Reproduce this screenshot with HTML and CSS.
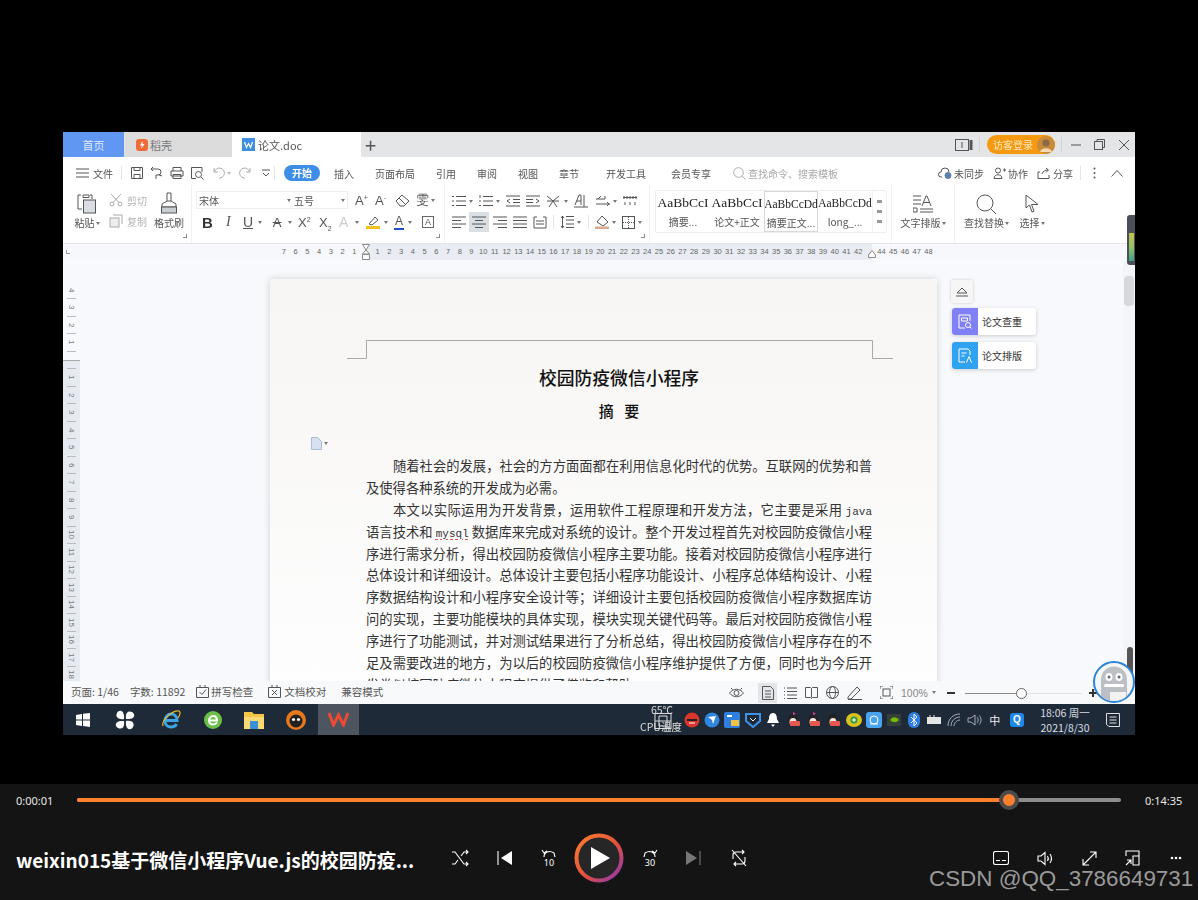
FILE: index.html
```html
<!DOCTYPE html>
<html lang="zh">
<head>
<meta charset="utf-8">
<title>论文.doc</title>
<link rel="stylesheet" href="styles.css">
</head>
<body>
<div class="stage">
<div class="window">

  <div class="tabs">
    <div class="tab tab-home">首页</div>
    <div class="tab tab-shell"><svg width="12" height="12" viewBox="0 0 12 12"><rect width="12" height="12" rx="3" fill="#ef6b3a"/><path d="M6.5 2 4 6.5h2L5 10l3.5-5H6.5z" fill="#fff"/></svg><span>稻壳</span></div>
    <div class="tab tab-doc"><svg width="13" height="13" viewBox="0 0 13 13"><rect width="13" height="13" fill="#3f8fe0"/><path d="M2.5 4 4.5 9.5 6.5 5.5 8.5 9.5 10.5 4" fill="none" stroke="#fff" stroke-width="1.2"/></svg><span>论文.doc</span></div>
    <div class="tab-plus">+</div>
    <div class="tab-right">
      <svg class="ic" width="18" height="12" viewBox="0 0 18 12"><rect x=".5" y=".5" width="13" height="11"/><path d="M16 1v10" stroke-width="3"/><path d="M7 3v6" stroke-width="1"/></svg>
      <span class="vsep"></span>
      <div class="login"><span>访客登录</span><svg width="18" height="18" viewBox="0 0 18 18"><circle cx="9" cy="9" r="9" fill="#c98a3a"/><circle cx="9" cy="7" r="3.6" fill="#8a6a4a"/><path d="M3 16c1-5 11-5 12 0z" fill="#f3d9b0"/></svg></div>
      <span class="vsep"></span>
      <svg class="ic win-min" width="10" height="10" viewBox="0 0 10 10"><path d="M0 5h10"/></svg>
      <svg class="ic win-max" width="11" height="11" viewBox="0 0 11 11"><rect x=".5" y="2.5" width="8" height="8"/><path d="M3 2.5V.5h7.500v8H8.500"/></svg>
      <svg class="ic win-close" width="10" height="10" viewBox="0 0 10 10"><path d="M0 0l10 10M10 0 0 10"/></svg>
    </div>
  </div>

  <div class="menubar">
    <svg class="ic m-ham" width="13" height="10" viewBox="0 0 13 10"><path d="M0 1h13M0 5h13M0 9h13"/></svg>
    <span class="m-file">文件</span>
    <span class="m-sep"></span>
    <svg class="ic m-save" width="14" height="14" viewBox="0 0 14 14"><path d="M1.500 1.500h11v11h-11zM4 1.500v3h6v-3M4 12.500v-4h6v4"/></svg>
    <svg class="ic m-q" width="14" height="14" viewBox="0 0 14 14"><path d="M1 3h7a3 3 0 0 1 0 6H6v4M3 1 1 3l2 2M9 9l3 1"/></svg>
    <svg class="ic m-q" width="14" height="14" viewBox="0 0 14 14"><path d="M3 5V1.500h8V5M1 5h12v5H1zM3 8.500h8v4H3z"/></svg>
    <svg class="ic m-q" width="14" height="14" viewBox="0 0 14 14"><path d="M12 6V1.500H1.500v11H6"/><circle cx="8.500" cy="8.500" r="3"/><path d="m11 11 2.500 2.500"/></svg>
    <svg class="ic ic-light m-undo" width="12" height="12" viewBox="0 0 12 12"><path d="M1 1v4h4M1.500 5A5 5 0 1 1 6 11"/></svg><span class="dd dd-light"></span>
    <svg class="ic ic-light m-redo" width="12" height="12" viewBox="0 0 12 12"><path d="M11 1v4H7M10.500 5A5 5 0 1 0 6 11"/></svg>
    <svg class="ic m-more" width="8" height="8" viewBox="0 0 8 8"><path d="M0 1h8M1 4l3 3 3-3"/></svg>
    <span class="m-sep m-sep2"></span>
    <span class="m-active">开始</span>
    <span class="m-item m-i1">插入</span>
    <span class="m-item m-i2">页面布局</span>
    <span class="m-item m-i3">引用</span>
    <span class="m-item m-i3">审阅</span>
    <span class="m-item m-i3">视图</span>
    <span class="m-item m-i3">章节</span>
    <span class="m-item m-i4">开发工具</span>
    <span class="m-item m-i5">会员专享</span>
    <svg class="ic ic-light m-search" width="13" height="13" viewBox="0 0 13 13"><circle cx="5.500" cy="5.500" r="4.800"/><path d="m9 9 3.500 3.500"/></svg>
    <span class="m-hint">查找命令、搜索模板</span>
    <div class="m-right">
      <svg class="ic" width="14" height="12" viewBox="0 0 14 12"><path d="M4 10H3a2.500 2.500 0 0 1 0-5 4 4 0 0 1 8 0"/><circle cx="10" cy="8.500" r="3" fill="#5a7fa8" stroke="#5a7fa8"/></svg><span class="m-r-t">未同步</span>
      <svg class="ic m-r-i" width="13" height="12" viewBox="0 0 13 12"><circle cx="5" cy="3.500" r="2.500"/><path d="M1 11.500c0-5 8-5 8 0zM10 3h3M11.500 1.500v3"/></svg><span class="m-r-t">协作</span>
      <svg class="ic m-r-i" width="14" height="12" viewBox="0 0 14 12"><path d="M3 5H1v6.500h11V8M5 7c1-3 3-4 6-4M9 1l2.500 2L9 5.500"/></svg><span class="m-r-t">分享</span>
      <span class="m-sep m-sep3"></span>
      <svg class="m-dots" width="3" height="12" viewBox="0 0 3 12"><circle cx="1.500" cy="1.500" r="1" fill="#555"/><circle cx="1.500" cy="6" r="1" fill="#555"/><circle cx="1.500" cy="10.500" r="1" fill="#555"/></svg>
      <svg class="ic m-up" width="12" height="7" viewBox="0 0 12 7"><path d="m.5 6.500 5.500-6 5.500 6"/></svg>
    </div>
  </div>

  <div class="ribbon">
    <div class="group g-clip">
      <div class="big big-paste">
        <svg class="ic" width="20" height="22" viewBox="0 0 20 22"><path d="M4 3H1v14h4M6 3h6v2.500H6zM13 3h2v4"/><rect x="6.500" y="8" width="12" height="13" fill="#d9dde2"/></svg>
        <span>粘贴<i class="dd dd-in"></i></span>
      </div>
      <div class="clip-col">
        <div class="clip-row"><svg class="ic ic-light" width="14" height="14" viewBox="0 0 14 14"><circle cx="3" cy="11" r="2"/><circle cx="11" cy="11" r="2"/><path d="M4 9.500 12 1M10 9.500 2 1"/></svg><span>剪切</span></div>
        <div class="clip-row"><svg class="ic ic-light" width="14" height="14" viewBox="0 0 14 14"><rect x="1" y="4" width="9" height="9" fill="#eee"/><path d="M4 1h9v9"/></svg><span>复制</span></div>
      </div>
      <div class="big big-brush">
        <svg class="ic" width="18" height="22" viewBox="0 0 18 22"><path d="M7 1h4v8H7zM7 9 2 12v3h14v-3l-5-3"/><rect x="1.500" y="15" width="15" height="6" fill="#c9ced4"/></svg>
        <span>格式刷</span>
      </div>
      <i class="corner"></i>
    </div>

    <div class="group g-font">
      <div class="font-row">
        <div class="fontbox"><div class="f-name">宋体<i class="dd"></i></div><div class="f-size">五号<i class="dd"></i></div></div>
        <span class="glyph g-a1">A<sup>+</sup></span>
        <span class="glyph g-a2">A<sup>-</sup></span>
        <svg class="ic g-eraser" width="15" height="13" viewBox="0 0 15 13"><path d="m1 7 6-6 7 6-5 5H5zM4 4l7 7"/></svg>
        <span class="glyph g-wen">雯</span><i class="dd"></i>
      </div>
      <div class="font-row2">
        <span class="b-b">B</span>
        <span class="b-i">I</span>
        <span class="b-u">U</span><i class="dd"></i>
        <span class="b-s">A</span><i class="dd"></i>
        <span class="b-x">X<sup>2</sup></span>
        <span class="b-x b-x2">X<sub>2</sub></span>
        <span class="b-o">A</span><i class="dd"></i>
        <svg class="b-h" width="14" height="14" viewBox="0 0 14 14"><path d="M3 9 9 2l3 3-6 5z" fill="none" stroke="#555"/><rect y="11" width="14" height="3" fill="#f0c419"/></svg><i class="dd"></i>
        <span class="b-c">A</span><i class="dd"></i>
        <span class="b-box">A</span>
      </div>
      <i class="corner"></i>
    </div>

    <div class="group g-para">
      <div class="p-row">
        <svg class="ic" width="14" height="12" viewBox="0 0 14 12"><path d="M4 1.500h10M4 6h10M4 10.500h10M0 1.500h2M0 6h2M0 10.500h2" /></svg><i class="dd"></i>
        <svg class="ic p-g5" width="14" height="12" viewBox="0 0 14 12"><path d="M4 1.500h10M4 6h10M4 10.500h10M1 0v3M0 6h2M0 10.500h2"/></svg><i class="dd"></i>
        <svg class="ic p-g5" width="14" height="12" viewBox="0 0 14 12"><path d="M0 1h14M7 4.500h7M7 7.500h7M0 11h14M4 4 1 6l3 2"/></svg>
        <svg class="ic p-g6" width="14" height="12" viewBox="0 0 14 12"><path d="M0 1h14M0 4.500h7M0 7.500h7M0 11h14M10 4l3 2-3 2"/></svg>
        <svg class="ic p-g6" width="15" height="13" viewBox="0 0 15 13"><path d="M1 1l6 5 6-5M7 6 3 12M7 6l4 6M1 6h12"/></svg><i class="dd"></i>
        <svg class="ic p-g5" width="14" height="14" viewBox="0 0 14 14"><path d="M1 11 5 1h2v10M2.500 7H7M10 1v12M0 13h14"/></svg>
        <svg class="ic p-g8" width="14" height="12" viewBox="0 0 14 12"><path d="M0 4h9M5 1 2 4M0 9h14M11 7l2 2-2 2M9 1v3"/></svg><i class="dd"></i>
        <svg class="ic p-g5" width="14" height="10" viewBox="0 0 14 10"><path d="M0 1.500h14M1 0v3M4 0v3M7 0v3M10 0v3M13 0v3M2 6v3M7 6v3M12 6v3"/></svg>
      </div>
      <div class="p-row p-row2">
        <svg class="ic" width="14" height="12" viewBox="0 0 14 12"><path d="M0 1h14M0 4.500h9M0 8h14M0 11.500h9"/></svg>
        <span class="p-active"><svg class="ic" width="14" height="12" viewBox="0 0 14 12"><path d="M0 1h14M3 4.500h8M0 8h14M3 11.500h8"/></svg></span>
        <svg class="ic p-g4" width="14" height="12" viewBox="0 0 14 12"><path d="M0 1h14M5 4.500h9M0 8h14M5 11.500h9"/></svg>
        <svg class="ic p-g6" width="14" height="12" viewBox="0 0 14 12"><path d="M0 1h14M0 4.500h14M0 8h14M0 11.500h14"/></svg>
        <svg class="ic p-g6" width="14" height="13" viewBox="0 0 14 13"><path d="M1 1v11h12V1M1 1h3M10 1h3M3 5h8M3 8h8"/></svg>
        <span class="p-sep"></span>
        <svg class="ic p-g5" width="14" height="14" viewBox="0 0 14 14"><path d="M6 1.500h8M6 5h8M6 9h8M6 12.500h8M2.500 1v12M1 3l1.500-2L4 3M1 11l1.500 2L4 11"/></svg><i class="dd"></i>
        <span class="p-sep p-sep-b"></span>
        <svg class="ic p-g6" width="14" height="14" viewBox="0 0 14 14"><path d="m2 7 5-6 6 6-5 4z"/><rect y="11.500" width="14" height="2.500" fill="#d9a98f" stroke="none"/></svg><i class="dd"></i>
        <svg class="ic p-g6" width="13" height="13" viewBox="0 0 13 13"><rect x=".5" y=".5" width="12" height="12"/><path d="M6.500 1v11M1 6.500h11" stroke-dasharray="1 1"/></svg><i class="dd"></i>
      </div>
      <i class="corner"></i>
    </div>

    <div class="group g-style">
      <div class="stylebox">
        <div class="st"><b>AaBbCcI</b><span>摘要...</span></div>
        <div class="st"><b>AaBbCcI</b><span>论文+正文</span></div>
        <div class="st st-sel"><b class="st-sm">AaBbCcDd</b><span>摘要正文...</span></div>
        <div class="st"><b class="st-sm">AaBbCcDd</b><span>long_...</span></div>
        <div class="st-scroll"><i></i><i></i><i></i></div>
      </div>
    </div>

    <div class="group g-type big-cell">
      <svg class="ic" width="20" height="18" viewBox="0 0 20 18"><path d="M0 1h8M0 5h8M0 9h8M9 11l4-10h1l4 10M10.500 7.500h6M0 13h4v4H0zM7 14h13M7 17h13"/></svg>
      <span>文字排版<i class="dd dd-in"></i></span>
    </div>
    <div class="group g-find">
      <div class="big-cell f-find">
        <svg class="ic" width="21" height="20" viewBox="0 0 21 20"><circle cx="9" cy="9" r="8"/><path d="m15 15 5 5"/></svg>
        <span>查找替换<i class="dd dd-in"></i></span>
      </div>
      <div class="big-cell f-sel">
        <svg class="ic" width="14" height="19" viewBox="0 0 14 19"><path d="M1 1v13l3.500-3 2.500 7 2-.8-2.500-6.700H13z"/></svg>
        <span>选择<i class="dd dd-in"></i></span>
      </div>
    </div>
  </div>

  <div class="ruler">
    <span class="r-corner"></span>
    <div class="r-left"><span>7</span><span>6</span><span>5</span><span>4</span><span>3</span><span>2</span><span>1</span></div>
    <div class="r-band">
      <svg class="r-mark" width="8" height="17" viewBox="0 0 8 17"><path d="M.5.500h7L4 6zM4 6l3.500 4h-7zM.5 10.500h7v5h-7z" fill="#fff" stroke="#888"/></svg>
      <span>1</span><span>2</span><span>3</span><span>4</span><span>5</span><span>6</span><span>7</span><span>8</span><span>9</span><span>10</span><span>11</span><span>12</span><span>13</span><span>14</span><span>15</span><span>16</span><span>17</span><span>18</span><span>19</span><span>20</span><span>21</span><span>22</span><span>23</span><span>24</span><span>25</span><span>26</span><span>27</span><span>28</span><span>29</span><span>30</span><span>31</span><span>32</span><span>33</span><span>34</span><span>35</span><span>36</span><span>37</span><span>38</span><span>39</span><span>40</span><span>41</span><span>42</span>
      <svg class="r-mark2" width="8" height="8" viewBox="0 0 8 8"><path d="M4 .5 7.500 5v2.500h-7V5z" fill="#fff" stroke="#888"/></svg>
    </div>
    <div class="r-right"><span>44</span><span>45</span><span>46</span><span>47</span><span>48</span></div>
  </div>

  <div class="doc">
    <div class="vruler">
      <div class="v-top"><span>4</span><span>3</span><span>2</span><span>1</span></div>
      <div class="v-band"><span>1</span><span>2</span><span>3</span><span>4</span><span>5</span><span>6</span><span>7</span><span>8</span><span>9</span><span>10</span><span>11</span><span>12</span><span>13</span><span>14</span><span>15</span><span>16</span><span>17</span><span>18</span></div>
    </div>
    <div class="workspace">
      <div class="page">
        <svg class="marks" width="546" height="19" viewBox="0 0 546 19"><path d="M0 18.500h19.500V.5h506v18H546" fill="none" stroke="#a9a9a9"/></svg>
        <h1>校园防疫微信小程序</h1>
        <h2>摘 要</h2>
        <div class="note"><svg width="11" height="13" viewBox="0 0 11 13"><path d="M.5.500h6l4 4v8H.5z" fill="#d6e2f0" stroke="#a9bdd6"/></svg><i class="dd"></i></div>
        <p class="ln ind">随着社会的发展，社会的方方面面都在利用信息化时代的优势。互联网的优势和普</p>
        <p class="ln end">及使得各种系统的开发成为必需。</p>
        <p class="ln ind">本文以实际运用为开发背景，运用软件工程原理和开发方法，它主要是采用 <span class="mono">java</span></p>
        <p class="ln">语言技术和 <span class="mono err">mysql</span> 数据库来完成对系统的设计。整个开发过程首先对校园防疫微信小程</p>
        <p class="ln">序进行需求分析，得出校园防疫微信小程序主要功能。接着对校园防疫微信小程序进行</p>
        <p class="ln">总体设计和详细设计。总体设计主要包括小程序功能设计、小程序总体结构设计、小程</p>
        <p class="ln">序数据结构设计和小程序安全设计等；详细设计主要包括校园防疫微信小程序数据库访</p>
        <p class="ln">问的实现，主要功能模块的具体实现，模块实现关键代码等。最后对校园防疫微信小程</p>
        <p class="ln">序进行了功能测试，并对测试结果进行了分析总结，得出校园防疫微信小程序存在的不</p>
        <p class="ln">足及需要改进的地方，为以后的校园防疫微信小程序维护提供了方便，同时也为今后开</p>
        <p class="ln end">发类似校园防疫微信小程序提供了借鉴和帮助。</p>
      </div>
      <div class="float-up"><svg class="ic" width="12" height="10" viewBox="0 0 12 10"><path d="M1 6 6 1l5 5zM0 9h12"/></svg></div>
      <div class="float-btn fb-1"><span class="fb-ic fb-purple"><svg width="14" height="15" viewBox="0 0 14 15" fill="none" stroke="#fff"><path d="M12 7V1H1v13h6M3.500 4h6v3h-6z"/><circle cx="10" cy="11" r="2.500"/><path d="m12 13 1.500 1.500"/></svg></span><span>论文查重</span></div>
      <div class="float-btn fb-2"><span class="fb-ic fb-blue"><svg width="14" height="15" viewBox="0 0 14 15" fill="none" stroke="#fff"><path d="M12 7V3L10 1H1v13h6M3.500 5h5M3.500 8h3M8.500 14.500l2.500-6 2.500 6"/></svg></span><span>论文排版</span></div>
    </div>
    <div class="scrollbar"><i class="thumb"></i><i class="thumb-dark"></i></div>
  </div>

  <div class="status">
    <span class="s-t s-page">页面: 1/46</span>
    <span class="s-t s-count">字数: 11892</span>
    <svg class="ic s-ic1" width="13" height="13" viewBox="0 0 13 13"><path d="M.5 2.500h12v10H.5zM4 0v3M9 0v3M3.500 7 6 9.500l4-5"/></svg>
    <span class="s-t s-spell">拼写检查</span>
    <svg class="ic s-ic2" width="13" height="13" viewBox="0 0 13 13"><path d="M.5 2.500h12v10H.5zM4 0v3M9 0v3M4 5l5 5M9 5l-5 5"/></svg>
    <span class="s-t s-check">文档校对</span>
    <span class="s-t s-compat">兼容模式</span>
    <div class="s-right">
      <svg class="ic" width="15" height="12" viewBox="0 0 15 12"><path d="M.5 6c4-5 10-5 14 0-4 5-10 5-14 0zM2 1l1.500 1.500M13 1l-1.500 1.500"/><circle cx="7.500" cy="6" r="2.500"/></svg>
      <span class="s-active"><svg class="ic" width="12" height="14" viewBox="0 0 12 14"><path d="M.5.500h8l3 3v10H.5zM3 5h6M3 8h6M3 11h6"/></svg></span>
      <svg class="ic s-g1" width="13" height="12" viewBox="0 0 13 12"><path d="M3 1h10M3 4.500h10M3 8h10M3 11.500h10M0 1h1M0 4.500h1M0 8h1M0 11.500h1"/></svg>
      <svg class="ic s-g2" width="13" height="12" viewBox="0 0 13 12"><path d="M.5.500h5l1 1 1-1h5v10h-5l-1 1-1-1h-5zM6.500 1.500v9"/></svg>
      <svg class="ic s-g2" width="13" height="13" viewBox="0 0 13 13"><circle cx="6.500" cy="6.500" r="6"/><ellipse cx="6.500" cy="6.500" rx="3" ry="6"/><path d="M.5 6.500h12"/></svg>
      <svg class="ic s-g2" width="15" height="14" viewBox="0 0 15 14"><path d="M1 11 10 1l3 3-9 9H1zM1 13.500h14"/></svg>
      <svg class="ic s-g3" width="13" height="13" viewBox="0 0 13 13"><path d="M0 3V0h3M10 0h3v3M13 10v3h-3M3 13H0v-3"/><rect x="3" y="3" width="7" height="7"/></svg>
      <span class="s-zoom">100%</span><i class="dd s-dd"></i>
      <span class="s-minus"></span>
      <div class="slider"><span class="s-line"></span><i class="s-knob"></i></div>
      <span class="s-plus"></span>
    </div>
  </div>

  <div class="taskbar">
    <svg class="t-win" width="14" height="14" viewBox="0 0 14 14" fill="#fff"><path d="M0 2 6 1v5.500H0zM7 .8 14 0v6.500H7zM0 7.500h6V13l-6-1zM7 7.500h7V14l-7-1z"/></svg>
    <svg class="t-i t-i1" width="20" height="20" viewBox="0 0 20 20" fill="#fff"><path d="M9 9C3 10 0 7 2 3s8-3 7 6zM11 9C10 3 13 0 17 2s3 8-6 7zM11 11c6-1 9 2 7 6s-8 3-7-6zM9 11c1 6-2 9-6 7s-3-8 6-7z"/></svg>
    <svg class="t-i t-i2" width="20" height="20" viewBox="0 0 20 20"><path d="M5 10.500h11C16 6 13 4 10 4S4 7 4 11s3 6 6 6 4.500-1 5.500-3" fill="none" stroke="#3ca6e6" stroke-width="3"/><path d="M2 16C0 10 12 0 18 1c2 1 1 4-1 7" fill="none" stroke="#f0b92a" stroke-width="1.200"/></svg>
    <svg class="t-i" width="20" height="20" viewBox="0 0 20 20"><circle cx="10" cy="10" r="9" fill="#6cc04a"/><path d="M6 10.500h8C14 7 12 6 10 6s-4 2-4 4.500 2 4 4 4 3-.5 4-2" fill="none" stroke="#fff" stroke-width="2"/></svg>
    <svg class="t-i t-i4" width="20" height="18" viewBox="0 0 20 18"><path d="M0 1h8l2 2h10v15H0z" fill="#f3c64a"/><rect y="6" width="20" height="12" fill="#f8d974"/><rect x="6" y="10" width="8" height="8" fill="#3b8fd6"/></svg>
    <svg class="t-i" width="20" height="20" viewBox="0 0 20 20"><circle cx="10" cy="10" r="10" fill="#e8791e"/><circle cx="10" cy="11" r="6.500" fill="#222"/><circle cx="7.500" cy="9.500" r="1.600" fill="#f5f5f5"/><circle cx="12.500" cy="9.500" r="1.600" fill="#f5f5f5"/></svg>
    <span class="t-wps"><svg width="21" height="15" viewBox="0 0 21 15" fill="none" stroke="#ee4a32" stroke-width="3"><path d="m1 1 4.500 12 5-10 5 10L20 1"/></svg></span>
    <div class="tray">
      <svg class="tr" width="16" height="16" viewBox="0 0 16 16"><circle cx="8" cy="8" r="7.500" fill="#d8362a"/><path d="M3 7h10v2H3z" fill="#222"/><path d="M5 11h6" stroke="#fff"/></svg>
      <svg class="tr" width="16" height="16" viewBox="0 0 16 16"><circle cx="8" cy="8" r="7.500" fill="#2f86e0"/><path d="m4 5 8-1-3 8-1-4z" fill="#fff"/></svg>
      <svg class="tr" width="16" height="16" viewBox="0 0 16 16"><rect width="16" height="16" rx="2" fill="#2f7fe0"/><rect x="7" y="8" width="8" height="6" fill="#f0c040"/><path d="M3 4h5" stroke="#fff" stroke-width="2"/></svg>
      <svg class="tr" width="16" height="16" viewBox="0 0 16 16"><path d="M1 2h14v7l-7 6-7-6z" fill="none" stroke="#3d93ea" stroke-width="2"/><path d="m5 6 3 3 3-3" fill="none" stroke="#fff"/></svg>
      <svg class="tr" width="16" height="16" viewBox="0 0 16 16" fill="#fff"><path d="M8 1c3 0 4 3 4 6l2 4H2l2-4c0-3 1-6 4-6zM6 12.500h4L8 15z"/></svg>
      <svg class="tr" width="16" height="16" viewBox="0 0 16 16"><ellipse cx="8" cy="8" rx="5" ry="6.500" fill="#222"/><ellipse cx="8" cy="10" rx="3.500" ry="4" fill="#f1e9e0"/><rect x="5" y="9" width="10" height="5" rx="1" fill="#e8584e"/><path d="M8 0l3 2-3 1z" fill="#e23fa8"/></svg>
      <svg class="tr" width="16" height="16" viewBox="0 0 16 16"><ellipse cx="8" cy="8" rx="5" ry="6.500" fill="#222"/><ellipse cx="8" cy="10" rx="3.500" ry="4" fill="#f1e9e0"/><rect x="5" y="9" width="10" height="5" rx="1" fill="#e8584e"/><path d="M8 0l3 2-3 1z" fill="#e23fa8"/></svg>
      <svg class="tr" width="16" height="16" viewBox="0 0 16 16"><ellipse cx="8" cy="8" rx="5" ry="6.500" fill="#222"/><ellipse cx="8" cy="10" rx="3.500" ry="4" fill="#f1e9e0"/><rect x="5" y="9" width="10" height="5" rx="1" fill="#e8584e"/></svg>
      <svg class="tr" width="16" height="16" viewBox="0 0 16 16"><ellipse cx="8" cy="8" rx="8" ry="7" fill="#d9c21e"/><circle cx="8" cy="8" r="3.500" fill="#2f9a3f"/><path d="M6 8h4M8 6v4" stroke="#fff"/></svg>
      <svg class="tr" width="16" height="16" viewBox="0 0 16 16"><rect width="16" height="16" rx="3" fill="#4aa3ee"/><circle cx="8" cy="8" r="4" fill="none" stroke="#fff"/><path d="M4 12h8" stroke="#fff"/></svg>
      <svg class="tr" width="16" height="16" viewBox="0 0 16 16"><rect x="1" y="2" width="14" height="12" fill="#33413a"/><path d="M4 8c3-4 7-3 9 0-3 3-6 3-9 0z" fill="#76b900"/></svg>
      <svg class="tr" width="16" height="16" viewBox="0 0 16 16"><rect x="2" width="12" height="16" rx="6" fill="#2a7fe0"/><path d="m5 5 6 6-3 3V2l3 3-6 6" fill="none" stroke="#fff"/></svg>
      <svg class="tr" width="16" height="16" viewBox="0 0 16 16"><rect x="1" y="5" width="14" height="7" fill="#e6e6e6"/><path d="M4 5V3M8 5V3" stroke="#e6e6e6"/></svg>
      <svg class="tr" width="16" height="16" viewBox="0 0 16 16" fill="none" stroke="#aab"><path d="M2 14C2 7 7 2 14 2M5 14c0-5 4-9 9-9M8 14c0-3 3-6 6-6"/></svg>
      <svg class="tr" width="16" height="16" viewBox="0 0 16 16" fill="none" stroke="#aab"><path d="M1 6h3l4-3v10l-4-3H1zM10 5c1.500 2 1.500 4 0 6M12.500 3.500c2 3 2 6 0 9"/></svg>
      <span class="tr tr-zh">中</span>
      <span class="tr-q">Q</span>
    </div>
    <div class="clock"><span>18:06 周一</span><span>2021/8/30</span></div>
    <svg class="t-note" width="14" height="14" viewBox="0 0 14 14" fill="none" stroke="#ddd"><path d="M.5.500h13v13H3l-2.500-2zM3.500 4h7M3.500 7h7M3.500 10h7"/></svg>
  </div>

  <div class="cpu"><span>65℃</span><svg width="18" height="16" viewBox="0 0 18 16" fill="none" stroke="#ddd"><rect x="1" y=".5" width="16" height="15"/><path d="M5 3h8v10H5zM1 8h16"/></svg><span>CPU温度</span></div>
  <div class="side-meter"><i></i></div>
  <div class="robot"><svg width="38" height="38" viewBox="0 0 38 38"><path d="M6 38V17C6-1 32-1 32 17v21z" fill="#bcbfc3"/><ellipse cx="14" cy="14" rx="3.500" ry="4" fill="#fff"/><ellipse cx="24" cy="14" rx="3.500" ry="4" fill="#fff"/><circle cx="14" cy="14" r="1.500" fill="#667"/><circle cx="24" cy="14" r="1.500" fill="#667"/><rect x="9" y="21" width="20" height="3" rx="1.500" fill="#fff"/><rect x="15" y="29" width="16" height="9" fill="#f2f2f2"/></svg></div>
</div>
</div>

<div class="player">
  <div class="seek">
    <span class="time">0:00:01</span>
    <div class="track"><span class="played"></span><i class="knob"></i></div>
    <span class="time time-end">0:14:35</span>
  </div>
  <div class="controls">
    <div class="title">weixin015基于微信小程序Vue.js的校园防疫...</div>
    <div class="center">
      <svg class="pi" width="18" height="18" viewBox="0 0 18 18"><path d="M1 3h3l9 12h4M1 15h3l3-4M10 7l3-4h4M15 1l2 2-2 2M15 13l2 2-2 2"/></svg>
      <svg class="pi pf" width="16" height="16" viewBox="0 0 16 16"><path d="M1 1v14" stroke="#fff"/><path d="M15 1v14L4 8z" fill="#fff" stroke="none"/></svg>
      <div class="skip"><svg class="pi" width="16" height="9" viewBox="0 0 16 9"><path d="M3 8C3 3 8 1 13 4l1 4M1 1l2 3 3-2"/></svg><span>10</span></div>
      <div class="play"><svg width="50" height="50" viewBox="0 0 50 50"><defs><linearGradient id="rg" x1="0" y1="0" x2="1" y2="1"><stop offset="0" stop-color="#ff7f2a"/><stop offset=".55" stop-color="#e0503f"/><stop offset="1" stop-color="#8a35b8"/></linearGradient></defs><circle cx="25" cy="25" r="22.500" fill="#262626" stroke="url(#rg)" stroke-width="4"/><path d="M17 14v22l19-11z" fill="#fff"/></svg></div>
      <div class="skip"><svg class="pi" width="16" height="9" viewBox="0 0 16 9"><path d="M13 8C13 3 8 1 3 4L2 8M15 1l-2 3-3-2"/></svg><span>30</span></div>
      <svg class="pi pf pf-next" width="16" height="16" viewBox="0 0 16 16"><path d="M15 1v14" stroke="#777"/><path d="M1 1v14l11-7z" fill="#777" stroke="none"/></svg>
      <svg class="pi" width="18" height="18" viewBox="0 0 18 18"><path d="M3 10V6c0-2 1-3 3-3h8M12 1l2 2-2 2M15 8v4c0 2-1 3-3 3H4M6 13l-2 2 2 2M2 1l14 16"/></svg>
    </div>
    <div class="right">
      <svg class="pi" width="16" height="14" viewBox="0 0 16 14"><rect x=".5" y=".5" width="15" height="13" rx="2"/><path d="M3 9.500h4M9 9.500h4"/></svg>
      <svg class="pi" width="17" height="15" viewBox="0 0 17 15"><path d="M1 5h3l4-3.500v12L4 10H1zM10.500 5c1 1.500 1 3.500 0 5M13 3c2 3 2 6 0 9"/></svg>
      <svg class="pi" width="15" height="15" viewBox="0 0 15 15"><path d="M1 14 14 1M8 1h6v6M1 8v6h6"/></svg>
      <svg class="pi" width="15" height="16" viewBox="0 0 15 16"><path d="M1 6V1h13v14H8V6h6M1 15l5-5M2 10h4v4"/></svg>
      <svg class="pdots" width="12" height="4" viewBox="0 0 12 4" fill="#fff"><circle cx="2" cy="2" r="1.300"/><circle cx="6" cy="2" r="1.300"/><circle cx="10" cy="2" r="1.300"/></svg>
    </div>
  </div>
  <div class="watermark">CSDN @QQ_3786649731</div>
</div>
</body>
</html>
```

FILE: styles.css
```css
* { box-sizing: border-box; }
html, body { margin: 0; padding: 0; }
body {
  width: 1198px;
  height: 900px;
  overflow: hidden;
  background: #000;
  font-family: "Noto Sans CJK SC", "Liberation Sans", sans-serif;
  display: flex;
  flex-direction: column;
}
i { font-style: normal; display: inline-block; }
.stage { height: 784px; padding: 132px 0 0 63px; }
.window {
  position: relative;
  width: 1072px;
  height: 603px;
  background: #fff;
  display: flex;
  flex-direction: column;
  color: #555;
  font-size: 10px;
  filter: blur(.25px);
}
.ic { fill: none; stroke: #555; stroke-width: 1; flex: none; }
.ic-light { stroke: #aaa; }
.dd {
  width: 0; height: 0; flex: none;
  border-left: 2.5px solid transparent;
  border-right: 2.5px solid transparent;
  border-top: 3px solid #777;
  margin-left: 2px;
}
.dd-light { border-top-color: #bbb; }
.dd-in { margin-left: 1px; vertical-align: 2px; }

/* tabs */
.tabs { height: 25px; flex: none; background: #e3e5e6; display: flex; align-items: stretch; font-size: 11px; }
.tab { display: flex; align-items: center; justify-content: center; gap: 2px; }
.tab-home { width: 61px; background: #5f97f3; color: #dfe9fb; }
.tab-shell { width: 107px; margin-left: 1px; background: #dcdcdc; justify-content: flex-start; padding-left: 11px; color: #777; }
.tab-doc { width: 129px; background: #fff; justify-content: flex-start; padding-left: 10px; gap: 3px; color: #555; }
.tab-plus { width: 19px; font-size: 20px; line-height: 25px; text-align: center; color: #555; }
.tab-right { margin-left: auto; display: flex; align-items: center; }
.vsep { width: 1px; height: 15px; background: #d2d4d6; margin: 0 6px; }
.login { width: 68px; height: 19px; border-radius: 10px; background: #f59a10; color: #fde6bd; display: flex; align-items: center; justify-content: space-between; padding: 0 0 0 6px; font-size: 10px; margin-left: 1px; }
.win-min { margin-left: 3px; }
.win-max { margin-left: 13px; }
.win-close { margin: 0 6px 0 14px; }

/* menu */
.menubar { height: 28px; flex: none; display: flex; align-items: center; font-size: 10px; padding: 4px 0 0 13px; }
.m-file { margin-left: 4px; width: 22px; }
.m-sep { width: 1px; height: 14px; background: #e4e4e4; margin-left: 6px; }
.m-save { margin-left: 8px; }
.m-q { margin-left: 6px; }
.m-undo { margin-left: 9px; }
.m-redo { margin-left: 8px; }
.m-more { margin-left: 11px; }
.m-sep2 { margin-left: 4px; }
.m-active { width: 36px; height: 16px; border-radius: 8px; background: #3d8ee6; color: #fff; font-weight: 700; text-align: center; line-height: 16px; margin-left: 9px; }
.m-i1 { margin-left: 14px; }
.m-i2 { margin-left: 21px; }
.m-i3 { margin-left: 21px; }
.m-i4 { margin-left: 27px; }
.m-i5 { margin-left: 25px; }
.m-search { margin-left: 22px; }
.m-hint { color: #a8a8a8; margin-left: 2px; }
.m-right { margin-left: auto; display: flex; align-items: center; padding-right: 12px; }
.m-r-t { margin-left: 2px; }
.m-r-i { margin-left: 9px; }
.m-sep3 { margin-left: 7px; }
.m-dots { margin-left: 12px; }
.m-up { margin-left: 15px; }

/* ribbon */
.ribbon { height: 59px; flex: none; display: flex; border-bottom: 1px solid #e6e6e6; box-shadow: 0 1px 2px rgba(0,0,0,.05); position: relative; font-size: 10px; }
.group { position: relative; flex: none; border-right: 1px solid #f0f0f0; }
.corner { position: absolute; right: 4px; bottom: 5px; width: 4px; height: 4px; border-right: 1px solid #888; border-bottom: 1px solid #888; }
.g-clip { width: 129px; display: flex; padding-left: 10px; }
.big { display: flex; flex-direction: column; align-items: center; width: 28px; padding-top: 7px; gap: 1px; }
.big span { white-space: nowrap; line-height: 14px; margin-top: 1px; }
.clip-col { margin-left: 8px; width: 44px; padding-top: 8px; display: flex; flex-direction: column; gap: 7px; }
.clip-row { display: flex; align-items: center; gap: 4px; color: #b5b5b5; height: 14px; }
.big-brush { margin-left: 1px; width: 30px; }

.g-font { width: 253px; padding: 6px 0 0 4px; }
.font-row { display: flex; align-items: center; height: 18px; }
.fontbox { width: 152px; height: 18px; border: 1px solid #eee; display: flex; font-size: 10px; }
.f-name { width: 96px; display: flex; align-items: center; justify-content: space-between; padding: 0 2px; }
.f-size { flex: 1; display: flex; align-items: center; justify-content: space-between; padding: 0 2px 0 1px; }
.glyph { font-size: 13px; font-family: "Liberation Sans", sans-serif; line-height: 18px; }
.glyph sup { font-size: 7px; }
.g-a1 { margin-left: 7px; width: 20px; }
.g-a2 { width: 18px; }
.g-eraser { margin-left: 2px; }
.g-wen { margin-left: 6px; font-size: 13px; }
.font-row2 { display: flex; align-items: center; height: 18px; margin-top: 4px; padding-left: 6px; font-family: "Liberation Sans", sans-serif; font-size: 14px; }
.font-row2 .dd { margin-left: 4px; }
.b-b { font-weight: 700; color: #333; font-size: 15px; width: 10px; }
.b-i { margin-left: 14px; font-style: italic; font-family: "Liberation Serif", serif; width: 7px; }
.b-u { margin-left: 10px; text-decoration: underline; width: 11px; }
.b-s { margin-left: 8px; text-decoration: line-through; width: 14px; font-size: 13px; text-align: center; }
.b-x { margin-left: 6px; width: 14px; font-size: 13px; }
.b-x sup, .b-x sub { font-size: 7px; line-height: 0; }
.b-x2 { margin-left: 7px; }
.b-o { margin-left: 6px; width: 12px; color: #ccc; }
.b-h { margin-left: 7px; }
.b-c { margin-left: 6px; width: 10px; font-size: 12px; text-align: center; border-bottom: 2px solid #1f4fc8; line-height: 13px; }
.b-box { margin-left: 10px; width: 12px; height: 12px; border: 1px solid #666; font-size: 9px; line-height: 10px; text-align: center; }

.g-para { width: 205px; padding: 9px 0 0 7px; }
.p-row { display: flex; align-items: center; height: 14px; }
.p-row .dd { margin-left: 3px; }
.p-row2 { height: 20px; margin-top: 4px; }
.p-g4 { margin-left: 4px; }
.p-g5 { margin-left: 6px; }
.p-g6 { margin-left: 6px; }
.p-g8 { margin-left: 8px; }
.p-active { width: 20px; height: 20px; margin-left: 3px; background: #d9dfe3; display: flex; align-items: center; justify-content: center; }
.p-sep { width: 1px; height: 14px; background: #e4e4e4; margin-left: 6px; }
.p-sep-b { margin-left: 7px; }

.g-style { width: 242px; padding: 5px 0 0 5px; }
.stylebox { width: 232px; height: 43px; border: 1px solid #eee; border-radius: 2px; display: flex; }
.st { width: 54px; padding-top: 2px; display: flex; flex-direction: column; align-items: center; overflow: hidden; white-space: nowrap; }
.st b { font-family: "Liberation Serif", serif; font-weight: 400; font-size: 13.500px; color: #222; line-height: 20px; }
.st span { line-height: 16px; margin-top: 1px; }
.st .st-sm { font-size: 11.500px; }
.st-sel { border: 1px solid #d8d8d8; height: 41px; }
.st-scroll { flex: 1; display: flex; flex-direction: column; align-items: center; justify-content: space-around; padding: 5px 0; border-left: 1px solid #f2f2f2; }
.st-scroll i { width: 5px; height: 3px; background: #999; }

.big-cell { display: flex; flex-direction: column; align-items: center; }
.big-cell span { white-space: nowrap; line-height: 14px; }
.g-type { width: 63px; padding-top: 10px; gap: 3px; }
.g-find { width: 100px; display: flex; padding: 9px 0 0 8px; border-right: 0; }
.f-find { width: 47px; gap: 2px; }
.f-sel { margin-left: 9px; width: 26px; gap: 3px; }

/* rulers */
.ruler { height: 16px; flex: none; background: #f6f8fb; display: flex; font-size: 7.500px; font-family: "Liberation Sans", sans-serif; color: #666; line-height: 15px; position: relative; }
.ruler .r-corner { position: absolute; left: 3px; top: 6px; width: 4px; height: 4px; border-left: 1px solid #999; border-bottom: 1px solid #999; }
.ruler span { width: 11.720px; text-align: center; flex: none; }
.r-left { display: flex; margin-left: 215.100px; padding-right: 5.860px; }
.r-band { display: flex; width: 506px; padding-left: 5.860px; background: #e9edf3; position: relative; }
.r-mark { position: absolute; left: -4px; top: 0; }
.r-mark2 { position: absolute; right: -4px; top: 6px; }
.r-right { display: flex; margin-left: 3.700px; }

.doc { height: 421px; flex: none; display: flex; background: #f7f9fc; overflow: hidden; position: relative; }
.vruler { width: 17px; flex: none; font-size: 8px; font-family: "Liberation Sans", sans-serif; color: #777; background: #f7f9fc; }
.v-top { padding: 21px 0 8.750px; }
.v-band { background: #e6ebf2; height: 400px; padding-top: 8.750px; position: relative; }
.v-band::before { content: ""; position: absolute; left: 0; right: 0; top: 0; height: 1px; background: #aaa; }
.v-band::after { content: ""; position: absolute; left: 4px; right: 4px; top: 8.250px; height: 1px; background: #bbb; }
.vruler span { display: block; height: 17.500px; line-height: 17px; writing-mode: vertical-rl; text-align: center; width: 17px; position: relative; }
.vruler span::after { content: ""; position: absolute; left: 4px; right: 4px; bottom: -.5px; height: 1px; background: #bbb; }
.workspace { flex: 1; position: relative; }
.page {
  width: 667px;
  height: 460px;
  margin: 19px 0 0 190px;
  padding: 61px 65px 0 96px;
  background: linear-gradient(#f7f6f5, #f9f8f7 30%, #fff);
  box-shadow: 0 0 7px rgba(0,0,0,.16);
  color: #222;
}
.marks { display: block; margin-left: -19px; }
h1 { margin: 6px 0 0; font-size: 17.800px; font-weight: 500; line-height: 24px; text-align: center; color: #111; }
h2 { margin: 10px 0 0; font-size: 15px; font-weight: 500; line-height: 24px; text-align: center; color: #111; word-spacing: 7px; }
.note { height: 24px; margin: 8px 0 0 -55px; display: flex; align-items: center; }
.ln {
  margin: 0;
  width: 506px;
  font-size: 13.300px;
  line-height: 21.900px;
  height: 21.900px;
  white-space: nowrap;
  text-align: justify;
  text-align-last: justify;
  color: #333;
}
.ind { padding-left: 27px; }
.end { text-align-last: left; }
.mono { font-family: "Liberation Mono", monospace; font-size: 11px; }
.err { text-decoration: underline dashed #d9534f 1px; text-underline-offset: 2px; }
.float-up { position: absolute; left: 871px; top: 20px; width: 22px; height: 23px; background: #f6f6f6; box-shadow: 0 0 3px rgba(0,0,0,.2); display: flex; align-items: center; justify-content: center; border-radius: 2px; }
.float-btn { position: absolute; left: 872px; width: 84px; height: 27px; background: #fff; border-radius: 3px; box-shadow: 0 1px 4px rgba(0,0,0,.18); display: flex; align-items: center; gap: 4px; color: #333; font-size: 10px; overflow: hidden; }
.fb-1 { top: 48px; }
.fb-2 { top: 82px; }
.fb-ic { width: 26px; height: 27px; display: flex; align-items: center; justify-content: center; }
.fb-purple { background: #8181f7; }
.fb-blue { background: #2fa3f2; }
.scrollbar { width: 12px; flex: none; background: #f3f5f8; position: relative; }
.thumb { position: absolute; left: 1px; top: 16px; width: 10px; height: 30px; border-radius: 4px; background: #d5d8dc; }
.thumb-dark { position: absolute; left: 4px; top: 387px; width: 6px; height: 34px; border-radius: 3px; background: #555; }
.side-meter { position: absolute; left: 1064px; top: 83px; width: 8px; height: 50px; background: #4a4f58; border-radius: 3px 0 0 3px; }
.side-meter i { position: absolute; left: 2px; right: 1px; top: 18px; bottom: 4px; background: linear-gradient(#c9c24a, #8fbf6a 55%, #3f9f90); }

/* status */
.status { height: 23px; flex: none; background: #f8f9fa; display: flex; align-items: center; font-size: 10.500px; padding: 0 0 2px 8px; position: relative; }
.s-count { margin-left: 11px; }
.s-ic1 { margin-left: 11px; }
.s-spell { margin-left: 2px; }
.s-ic2 { margin-left: 15px; }
.s-check { margin-left: 3px; }
.s-compat { margin-left: 15px; }
.s-right { position: absolute; left: 666px; top: 0; height: 23px; display: flex; align-items: center; }
.s-active { width: 19px; height: 20px; margin-left: 14px; background: #e2e6ea; display: flex; align-items: center; justify-content: center; }
.s-g1 { margin-left: 7px; }
.s-g2 { margin-left: 8px; }
.s-g3 { margin-left: 18px; }
.s-zoom { margin-left: 8px; font-family: "Liberation Sans", sans-serif; font-size: 10.500px; color: #888; }
.s-dd { margin-left: 4px; }
.s-minus { width: 8px; height: 2px; background: #333; margin-left: 11px; }
.slider { width: 117px; margin-left: 10px; height: 14px; position: relative; }
.s-line { position: absolute; left: 0; top: 7px; width: 56px; height: 1px; background: #888; }
.s-line::after { content: ""; position: absolute; left: 56px; top: 0; width: 61px; height: 1px; background: #e0e0e0; }
.s-knob { position: absolute; left: 51px; top: 2px; width: 11px; height: 11px; border-radius: 50%; border: 1px solid #666; background: #fff; }
.s-plus { width: 8px; height: 2px; background: #333; margin-left: 7px; position: relative; }
.s-plus::after { content: ""; position: absolute; left: 3px; top: -3px; width: 2px; height: 8px; background: #333; }

/* taskbar */
.taskbar { height: 31px; flex: none; background: #1f2a38; display: flex; align-items: center; padding-left: 13px; color: #ddd; }
.t-i { margin-left: 22px; flex: none; }
.t-i1 { margin-left: 25px; }
.t-i2 { margin-left: 26px; }
.t-i4 { margin-left: 21px; }
.t-wps { width: 41px; height: 31px; margin-left: 12px; background: #4d5561; display: flex; align-items: center; justify-content: center; }
.tray { position: absolute; left: 621px; bottom: 0; height: 31px; display: flex; align-items: center; gap: 4.200px; }
.tr { flex: none; }
.tr-zh { width: 16px; font-size: 11px; text-align: center; color: #eee; }
.tr-q { width: 14px; height: 14px; margin-left: 3px; border-radius: 3px; background: #1e88e8; color: #fff; font-size: 10px; line-height: 14px; text-align: center; font-family: "Liberation Sans", sans-serif; font-weight: 700; }
.clock { position: absolute; left: 962px; bottom: 0; width: 80px; height: 31px; display: flex; flex-direction: column; align-items: center; justify-content: center; font-size: 10.500px; line-height: 15px; color: #d9dde2; }
.t-note { position: absolute; left: 1043px; bottom: 8px; }
.cpu { position: absolute; left: 577px; top: 572px; width: 44px; height: 31px; display: flex; flex-direction: column; align-items: center; color: #ddd; font-size: 10.500px; line-height: 12px; }
.cpu svg { position: absolute; left: 14px; top: 9px; }
.cpu span:last-child { position: absolute; top: 17px; left: 0; white-space: nowrap; }
.robot { position: absolute; left: 1030px; top: 529px; width: 42px; height: 42px; border-radius: 50%; border: 2px solid #2d83d8; background: #f4f6f8; display: flex; align-items: flex-end; justify-content: center; overflow: hidden; }

/* player */
.player { height: 116px; flex: none; background: #141414; color: #fff; position: relative; }
.seek { height: 32px; display: flex; align-items: center; padding: 0 0 0 16px; }
.time { width: 61px; flex: none; font-family: "Noto Sans", sans-serif; font-size: 11px; color: #e8e8e8; }
.time-end { margin-left: 24px; width: auto; }
.track { width: 1044px; flex: none; height: 4px; border-radius: 2px; background: #8c8c8c; position: relative; }
.played { position: absolute; left: 0; top: 0; width: 932px; height: 4px; border-radius: 2px; background: #ff7f2f; }
.knob { position: absolute; left: 922px; top: -8px; width: 20px; height: 20px; border-radius: 50%; background: #ff7f2f; border: 4px solid #4a4a4a; }
.controls { height: 84px; position: relative; }
.title { position: absolute; left: 16px; top: 30px; font-size: 19px; font-weight: 700; line-height: 28px; white-space: nowrap; }
.pi { fill: none; stroke: #fff; stroke-width: 1.100; flex: none; }
.center { position: absolute; left: 451px; top: 17px; height: 50px; display: flex; align-items: center; gap: 0; }
.pf { margin-left: 28px; }
.skip { width: 16px; margin-left: 28px; display: flex; flex-direction: column; align-items: center; font-size: 9px; line-height: 9px; font-family: "Noto Sans", sans-serif; }
.play { width: 50px; height: 50px; margin-left: 17px; }
.play + .skip { margin-left: 18px; }
.pf-next { margin-left: 27px; }
.center > .pi:last-child { margin-left: 29px; }
.right { position: absolute; left: 993px; top: 17px; height: 50px; display: flex; align-items: center; gap: 28px; }
.pdots { margin-left: 2px; }
.watermark { position: absolute; left: 929px; top: 81px; font-family: "Liberation Sans", sans-serif; font-size: 22.400px; line-height: 28px; color: #9a9a9a; white-space: nowrap; }
```
